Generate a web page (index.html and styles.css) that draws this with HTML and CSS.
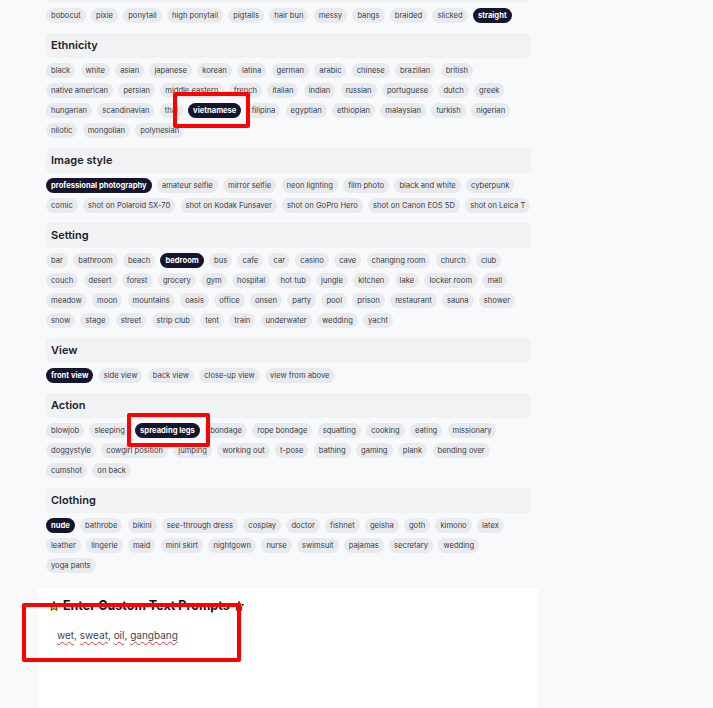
FILE: index.html
```html
<!DOCTYPE html>
<html lang="en">
<head>
    <meta charset="UTF-8">
    <meta name="viewport" content="width=device-width, initial-scale=1.0">
    <title>Prompt Builder</title>
    <link rel="stylesheet" href="styles.css">
</head>
<body>
    <div class="page">
        <!-- Hair -->
        <section class="group">
            <h2 class="group-title">Hair style</h2>
            <div class="tags">
                <div class="tag-row">
                    <button class="tag">bobocut</button>
                    <button class="tag">pixie</button>
                    <button class="tag">ponytail</button>
                    <button class="tag">high ponytail</button>
                    <button class="tag">pigtails</button>
                    <button class="tag">hair bun</button>
                    <button class="tag">messy</button>
                    <button class="tag">bangs</button>
                    <button class="tag">braided</button>
                    <button class="tag">slicked</button>
                    <button class="tag active">straight</button>
                </div>
            </div>
        </section>

        <!-- Ethnicity -->
        <section class="group">
            <h2 class="group-title">Ethnicity</h2>
            <div class="tags">
                <div class="tag-row">
                    <button class="tag">black</button>
                    <button class="tag">white</button>
                    <button class="tag">asian</button>
                    <button class="tag">japanese</button>
                    <button class="tag">korean</button>
                    <button class="tag">latina</button>
                    <button class="tag">german</button>
                    <button class="tag">arabic</button>
                    <button class="tag">chinese</button>
                    <button class="tag">brazilian</button>
                    <button class="tag">british</button>
                </div>
                <div class="tag-row">
                    <button class="tag">native american</button>
                    <button class="tag">persian</button>
                    <button class="tag">middle eastern</button>
                    <button class="tag">french</button>
                    <button class="tag">italian</button>
                    <button class="tag">indian</button>
                    <button class="tag">russian</button>
                    <button class="tag">portuguese</button>
                    <button class="tag">dutch</button>
                    <button class="tag">greek</button>
                </div>
                <div class="tag-row">
                    <button class="tag">hungarian</button>
                    <button class="tag">scandinavian</button>
                    <button class="tag">thai</button>
                    <button class="tag active">vietnamese</button>
                    <button class="tag">filipina</button>
                    <button class="tag">egyptian</button>
                    <button class="tag">ethiopian</button>
                    <button class="tag">malaysian</button>
                    <button class="tag">turkish</button>
                    <button class="tag">nigerian</button>
                </div>
                <div class="tag-row">
                    <button class="tag">nilotic</button>
                    <button class="tag">mongolian</button>
                    <button class="tag">polynesian</button>
                </div>
            </div>
        </section>

        <!-- Image style -->
        <section class="group">
            <h2 class="group-title">Image style</h2>
            <div class="tags">
                <div class="tag-row">
                    <button class="tag active">professional photography</button>
                    <button class="tag">amateur selfie</button>
                    <button class="tag">mirror selfie</button>
                    <button class="tag">neon lighting</button>
                    <button class="tag">film photo</button>
                    <button class="tag">black and white</button>
                    <button class="tag">cyberpunk</button>
                </div>
                <div class="tag-row">
                    <button class="tag">comic</button>
                    <button class="tag">shot on Polaroid SX-70</button>
                    <button class="tag">shot on Kodak Funsaver</button>
                    <button class="tag">shot on GoPro Hero</button>
                    <button class="tag">shot on Canon EOS 5D</button>
                    <button class="tag">shot on Leica T</button>
                </div>
            </div>
        </section>

        <!-- Setting -->
        <section class="group">
            <h2 class="group-title">Setting</h2>
            <div class="tags">
                <div class="tag-row">
                    <button class="tag">bar</button>
                    <button class="tag">bathroom</button>
                    <button class="tag">beach</button>
                    <button class="tag active">bedroom</button>
                    <button class="tag">bus</button>
                    <button class="tag">cafe</button>
                    <button class="tag">car</button>
                    <button class="tag">casino</button>
                    <button class="tag">cave</button>
                    <button class="tag">changing room</button>
                    <button class="tag">church</button>
                    <button class="tag">club</button>
                </div>
                <div class="tag-row">
                    <button class="tag">couch</button>
                    <button class="tag">desert</button>
                    <button class="tag">forest</button>
                    <button class="tag">grocery</button>
                    <button class="tag">gym</button>
                    <button class="tag">hospital</button>
                    <button class="tag">hot tub</button>
                    <button class="tag">jungle</button>
                    <button class="tag">kitchen</button>
                    <button class="tag">lake</button>
                    <button class="tag">locker room</button>
                    <button class="tag">mall</button>
                </div>
                <div class="tag-row">
                    <button class="tag">meadow</button>
                    <button class="tag">moon</button>
                    <button class="tag">mountains</button>
                    <button class="tag">oasis</button>
                    <button class="tag">office</button>
                    <button class="tag">onsen</button>
                    <button class="tag">party</button>
                    <button class="tag">pool</button>
                    <button class="tag">prison</button>
                    <button class="tag">restaurant</button>
                    <button class="tag">sauna</button>
                    <button class="tag">shower</button>
                </div>
                <div class="tag-row">
                    <button class="tag">snow</button>
                    <button class="tag">stage</button>
                    <button class="tag">street</button>
                    <button class="tag">strip club</button>
                    <button class="tag">tent</button>
                    <button class="tag">train</button>
                    <button class="tag">underwater</button>
                    <button class="tag">wedding</button>
                    <button class="tag">yacht</button>
                </div>
            </div>
        </section>

        <!-- View -->
        <section class="group">
            <h2 class="group-title">View</h2>
            <div class="tags">
                <div class="tag-row">
                    <button class="tag active">front view</button>
                    <button class="tag">side view</button>
                    <button class="tag">back view</button>
                    <button class="tag">close-up view</button>
                    <button class="tag">view from above</button>
                </div>
            </div>
        </section>

        <!-- Action -->
        <section class="group">
            <h2 class="group-title">Action</h2>
            <div class="tags">
                <div class="tag-row">
                    <button class="tag">blowjob</button>
                    <button class="tag">sleeping</button>
                    <button class="tag active">spreading legs</button>
                    <button class="tag">bondage</button>
                    <button class="tag">rope bondage</button>
                    <button class="tag">squatting</button>
                    <button class="tag">cooking</button>
                    <button class="tag">eating</button>
                    <button class="tag">missionary</button>
                </div>
                <div class="tag-row">
                    <button class="tag">doggystyle</button>
                    <button class="tag">cowgirl position</button>
                    <button class="tag">jumping</button>
                    <button class="tag">working out</button>
                    <button class="tag">t-pose</button>
                    <button class="tag">bathing</button>
                    <button class="tag">gaming</button>
                    <button class="tag">plank</button>
                    <button class="tag">bending over</button>
                </div>
                <div class="tag-row">
                    <button class="tag">cumshot</button>
                    <button class="tag">on back</button>
                </div>
            </div>
        </section>

        <!-- Clothing -->
        <section class="group">
            <h2 class="group-title">Clothing</h2>
            <div class="tags">
                <div class="tag-row">
                    <button class="tag active">nude</button>
                    <button class="tag">bathrobe</button>
                    <button class="tag">bikini</button>
                    <button class="tag">see-through dress</button>
                    <button class="tag">cosplay</button>
                    <button class="tag">doctor</button>
                    <button class="tag">fishnet</button>
                    <button class="tag">geisha</button>
                    <button class="tag">goth</button>
                    <button class="tag">kimono</button>
                    <button class="tag">latex</button>
                </div>
                <div class="tag-row">
                    <button class="tag">leather</button>
                    <button class="tag">lingerie</button>
                    <button class="tag">maid</button>
                    <button class="tag">mini skirt</button>
                    <button class="tag">nightgown</button>
                    <button class="tag">nurse</button>
                    <button class="tag">swimsuit</button>
                    <button class="tag">pajamas</button>
                    <button class="tag">secretary</button>
                    <button class="tag">wedding</button>
                </div>
                <div class="tag-row">
                    <button class="tag">yoga pants</button>
                </div>
            </div>
        </section>

        <!-- Custom prompt -->
        <section class="custom">
            <h3 class="custom-title">
                <svg class="star" viewBox="0 0 24 24"><path d="M12 2.5l2.9 6.1 6.6.8-4.9 4.6 1.3 6.6L12 17.3l-5.9 3.3 1.3-6.6-4.9-4.6 6.6-.8z"/></svg>
                Enter Custom Text Prompts
                <svg class="star" viewBox="0 0 24 24"><path d="M12 2.5l2.9 6.1 6.6.8-4.9 4.6 1.3 6.6L12 17.3l-5.9 3.3 1.3-6.6-4.9-4.6 6.6-.8z"/></svg>
            </h3>
            <div class="prompt-input">
                <span class="typo">wet</span>, <span class="typo">sweat</span>, <span class="typo">oil</span>, <span class="typo">gangbang</span>
            </div>
        </section>
    </div>

    <!-- red marker boxes -->
    <div class="marker marker-ethnicity"></div>
    <div class="marker marker-action"></div>
    <div class="marker marker-prompt"></div>
</body>
</html>
```

FILE: styles.css
```css
body {
    margin: 0;
    background-color: #f8f9fb;
    font-family: Inter, "Noto Sans", sans-serif;
    color: #2b2f3a;
    position: relative;
    height: 708px;
    overflow: hidden;
}
.page {
    width: 500px;
    margin: -22px 0 0 38px;
}
.group {
    padding: 0 7px 0 8px;
    margin-bottom: 10px;
}
.group-title {
    margin: 0 0 5px;
    height: 25px;
    line-height: 25px;
    padding: 0 5px;
    background-color: #f1f2f4;
    border-radius: 5px;
    font-size: 11px;
    font-weight: 600;
    color: #1d212b;
}
.tags {
    display: flex;
    flex-direction: column;
    gap: 5px;
}
.tag-row {
    display: flex;
    gap: 5.3px;
}
.tag {
    font-family: inherit;
    font-size: 7.6px;
    height: 15px;
    line-height: 15px;
    padding: 0 5px;
    border: none;
    border-radius: 8px;
    background-color: #e9eaed;
    color: #3a3e48;
    white-space: nowrap;
    cursor: pointer;
}
.tag.active {
    background-color: #15152e;
    color: white;
    font-weight: 700;
}
.custom {
    margin-top: 15px;
    background-color: white;
    height: 100px;
    padding: 10px 10px;
}
.custom-title {
    margin: 0;
    display: flex;
    align-items: center;
    gap: 3px;
    font-size: 12.5px;
    font-weight: 700;
    color: #111318;
}
.star {
    width: 12px;
    height: 12px;
    fill: #f6c12b;
    stroke: #3a2a00;
    stroke-width: 1.8;
    stroke-linejoin: round;
}
.prompt-input {
    margin-top: 14px;
    padding: 0 9px;
    font-size: 10px;
    line-height: 16px;
    color: #3d4352;
}
.typo {
    text-decoration: underline wavy #e53935;
    text-decoration-thickness: 1px;
    text-underline-offset: 2px;
}
.marker {
    position: absolute;
    border: 4px solid #ff0000;
    border-radius: 2px;
    box-sizing: border-box;
}
.marker-ethnicity {
    left: 173px;
    top: 92px;
    width: 77px;
    height: 36px;
}
.marker-action {
    left: 127px;
    top: 413px;
    width: 83px;
    height: 34px;
}
.marker-prompt {
    left: 22px;
    top: 603px;
    width: 219px;
    height: 59px;
}
```
